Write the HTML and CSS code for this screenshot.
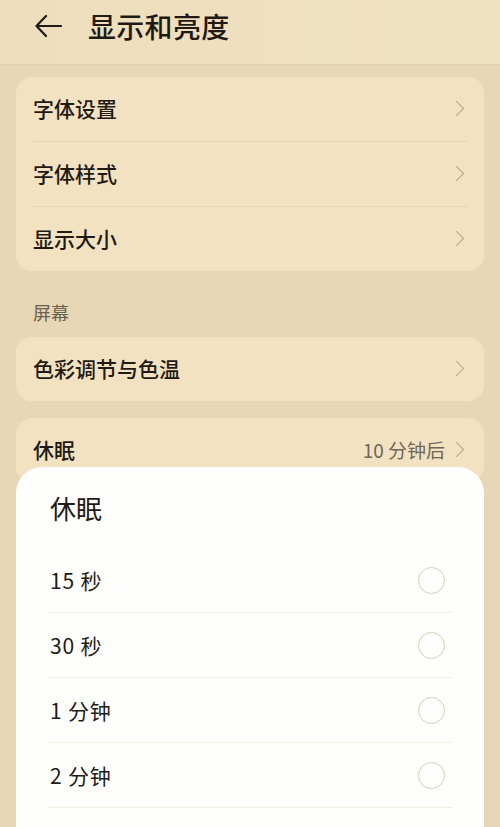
FILE: index.html
```html
<!DOCTYPE html>
<html lang="zh-CN">
<head>
  <meta charset="UTF-8">
  <meta name="viewport" content="width=device-width, initial-scale=1.0">
  <title>显示和亮度</title>
  <link rel="stylesheet" href="styles.css">
</head>
<body>
  <header class="top-bar">
    <svg class="back-icon" width="28" height="24" viewBox="0 0 28 24" fill="none" stroke="#1f1a14" stroke-width="2.2" stroke-linecap="round" stroke-linejoin="round">
      <path d="M26 12H2M11 2L1.5 12L11 22"/>
    </svg>
    <h1>显示和亮度</h1>
  </header>

  <main class="settings">
    <div class="card">
      <div class="row"><span class="row-label">字体设置</span><span class="chevron"></span></div>
      <div class="row"><span class="row-label">字体样式</span><span class="chevron"></span></div>
      <div class="row"><span class="row-label">显示大小</span><span class="chevron"></span></div>
    </div>

    <div class="section-title">屏幕</div>

    <div class="card">
      <div class="row"><span class="row-label">色彩调节与色温</span><span class="chevron"></span></div>
    </div>

    <div class="card card-gap">
      <div class="row">
        <span class="row-label">休眠</span>
        <span class="row-value">10 分钟后</span>
        <span class="chevron"></span>
      </div>
    </div>
  </main>

  <!-- sleep picker sheet -->
  <div class="sheet">
    <div class="sheet-title">休眠</div>
    <ul class="options">
      <li class="option"><span>15 秒</span><span class="radio"></span></li>
      <li class="option"><span>30 秒</span><span class="radio"></span></li>
      <li class="option"><span>1 分钟</span><span class="radio"></span></li>
      <li class="option"><span>2 分钟</span><span class="radio"></span></li>
    </ul>
  </div>
</body>
</html>
```

FILE: styles.css
```css
* {
  box-sizing: border-box;
  margin: 0;
  padding: 0;
}

body {
  font-family: 'Noto Sans CJK SC', 'Noto Sans', sans-serif;
  background: #e8d7b6;
  color: #1f1a14;
  width: 500px;
  height: 827px;
  overflow: hidden;
  position: relative;
}

.top-bar {
  height: 65px;
  background: linear-gradient(90deg, #eedebd, #f0e1c2);
  border-bottom: 1px solid #e2d0ae;
  display: flex;
  align-items: center;
  padding: 0 0 13px 35px;
}

.back-icon {
  margin-right: 25px;
}

.top-bar h1 {
  font-size: 28px;
  font-weight: 500;
  letter-spacing: 0.3px;
}

.settings {
  padding: 12px 16px 0;
}

.card {
  background: #f3e2c1;
  border-radius: 16px;
  padding: 0 16px 0 17px;
}

.card-gap {
  margin-top: 17px;
}

.row {
  height: 65px;
  display: flex;
  align-items: center;
  border-bottom: 1px solid #e7d4b2;
  padding-bottom: 2px;
}

.row:last-child {
  height: 64px;
  border-bottom: none;
}

.row-label {
  flex: 1;
  font-size: 21px;
  font-weight: 500;
}

.row-value {
  font-size: 19px;
  color: #6f6656;
  margin-right: 6px;
}

.chevron {
  width: 11px;
  height: 11px;
  border-top: 1.8px solid #b2a690;
  border-right: 1.8px solid #b2a690;
  transform: rotate(45deg);
  margin-right: 6px;
}

.section-title {
  font-size: 18px;
  color: #6b604e;
  line-height: 24px;
  padding: 29px 17px 13px;
}

.sheet {
  position: absolute;
  top: 467px;
  left: 16px;
  width: 468px;
  height: 360px;
  background: #fefefd;
  border-radius: 26px 26px 0 0;
  padding: 0 32px;
}

.sheet-title {
  font-size: 26px;
  font-weight: 400;
  line-height: 34px;
  padding: 24px 0 0 2px;
  height: 81px;
}

.options {
  list-style: none;
}

.option {
  height: 65px;
  display: flex;
  align-items: center;
  justify-content: space-between;
  border-bottom: 1px solid #f6efe1;
  font-size: 21px;
  letter-spacing: 0.8px;
  padding: 0 7px 0 2px;
}

.radio {
  width: 27px;
  height: 27px;
  border-radius: 50%;
  border: 1.5px solid #d9ceb3;
}
```
